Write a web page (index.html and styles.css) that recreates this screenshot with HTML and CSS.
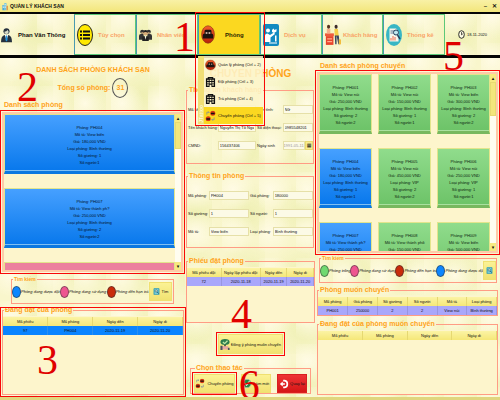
FILE: index.html
```html
<!DOCTYPE html>
<html lang="vi">
<head>
<meta charset="utf-8">
<title>QUẢN LÝ KHÁCH SẠN</title>
<link rel="stylesheet" href="styles.css">
</head>
<body>
<svg class="defs" aria-hidden="true">
  <defs>
    <linearGradient id="ball" x1="0" y1="0" x2="0" y2="1"><stop offset="0" stop-color="#f6602a"/><stop offset="1" stop-color="#b51f08"/></linearGradient>
    <symbol id="bed" viewBox="0 0 24 24" preserveAspectRatio="none"><circle cx="12" cy="12" r="11" fill="url(#ball)" stroke="#8c3a18"/><path d="M6 11V8q0-2 2-2h8q2 0 2 2v3zM3 17v-4q0-2 2-2h14q2 0 2 2v4z" fill="#1c1210"/><path d="M8 9h3v2H8zM13 9h3v2h-3z" fill="#f5d9c8"/></symbol>
    <symbol id="building" viewBox="0 0 24 24"><path d="M6 1h12v3h4v19H2V4h4z" fill="#111"/><path d="M5 7h3v3H5zM10 7h4v3h-4zM16 7h3v3h-3zM5 12h3v3H5zM10 12h4v3h-4zM16 12h3v3h-3zM5 17h3v3H5zM16 17h3v3h-3zM10 18h4v5h-4zM9 3h6v1H9z" fill="#fdf5cc"/></symbol>
    <symbol id="move" viewBox="0 0 24 24"><circle cx="17" cy="6" r="5.500" fill="#d83a14"/><path d="M13 5h8v3h-8z" fill="#111"/><circle cx="7" cy="18" r="5.500" fill="#d83a14"/><path d="M3 17h8v3H3z" fill="#111"/><path d="M4 9V4h5M7 2l2 2-2 2M20 15v5h-5M17 22l-2-2 2-2" fill="none" stroke="#7886a0" stroke-width="1.500"/></symbol>
    <symbol id="find" viewBox="0 0 24 24"><rect x="2" y="1" width="20" height="22" rx="2" fill="#2596b8"/><rect x="5" y="3" width="14" height="18" fill="#7ccbd4"/><circle cx="11" cy="10" r="4" fill="#e8f4d8" stroke="#145a78" stroke-width="2"/><path d="m14 13 5 6" stroke="#145a78" stroke-width="3"/></symbol>
  </defs>
</svg>

<header class="titlebar">
  <svg class="logo" viewBox="0 0 16 20"><path d="M1 6h6v14H1z" fill="#4aa9d8"/><path d="M6 1h6v19H6z" fill="#70c3df"/><path d="M12 8h4v12h-4z" fill="#e49a4b"/><path d="M2 8h3v2H2zM2 12h3v2H2zM7 4h3v2H7zM7 8h3v2H7zM7 12h3v2H7z" fill="#eefafa"/></svg>
  <h1>QUẢN LÝ KHÁCH SẠN</h1>
  <button class="win" aria-label="Thu nhỏ">–</button>
  <button class="win" aria-label="Đóng">✕</button>
</header>

<nav class="menubar">
  <div class="user">
    <svg class="person" viewBox="0 0 20 28"><circle cx="10" cy="7" r="5.500" fill="#26313f"/><path d="M0 27q0-12 7-13h6q7 1 7 13z" fill="#26313f"/><path d="m7 14 3 10 3-10z" fill="#fff"/><path d="m9 15h2l1 8-2 3-2-3z" fill="#2293dc"/><path d="M6 8q4 0 6-3l2 3q0 4-4 4T6 8" fill="#d9dcc8"/></svg>
    <span>Phan Văn Thông</span>
  </div>
  <a href="#options"><svg viewBox="0 0 32 44" preserveAspectRatio="none"><ellipse cx="16" cy="22" rx="15" ry="21" fill="#ffe900" stroke="#222" stroke-width="2"/><path d="M12 13h14v4H12zM12 20h14v4H12zM12 27h14v4H12zM6 13h4v4H6zM6 20h4v4H6zM6 27h4v4H6z" fill="#111"/></svg><span>Tùy chọn</span></a>
  <a href="#staff"><svg class="small" viewBox="0 0 28 28"><circle cx="7" cy="7" r="4.500" fill="#333"/><circle cx="21" cy="7" r="4.500" fill="#333"/><path d="M0 24V16q0-4 4-4h6v12zM18 12h6q4 0 4 4v8H18z" fill="#333"/><circle cx="14" cy="10" r="5" fill="#d8ad7b"/><path d="M9 9q0-6 5-6t5 6q-5-3-10 0zM7 27v-6q0-5 4-5h6q4 0 4 5v6z" fill="#222"/><path d="m12 16 2 8 2-8z" fill="#f4f4e0"/><path d="M5 8h4v3H5zM19 8h4v3h-4z" fill="#d8ad7b"/></svg><span>Nhân viên</span></a>
  <div class="open">
    <a class="active" href="#rooms"><svg viewBox="0 0 24 24" preserveAspectRatio="none"><use href="#bed"/></svg><span>Phòng</span></a>
    <div class="menu">
      <div class="strip"><span>JTattoo</span></div>
      <ul>
        <li><a href="#m2"><svg viewBox="0 0 24 24"><use href="#bed"/></svg>Quản lý phòng (Ctrl + 2)</a></li>
        <li><a href="#m3"><svg viewBox="0 0 24 24"><use href="#building"/></svg>Đặt phòng (Crtl + 3)</a></li>
        <li><a href="#m4"><svg viewBox="0 0 24 24"><use href="#building"/></svg>Trả phòng (Ctrl + 4)</a></li>
        <li class="chosen"><a href="#m5"><svg viewBox="0 0 24 24"><use href="#move"/></svg>Chuyển phòng (Ctrl + 5)</a></li>
      </ul>
    </div>
    <div class="mark mark-menu"></div>
    <b class="num num-1">1</b>
  </div>
  <a href="#services"><svg viewBox="0 0 32 44" preserveAspectRatio="none"><rect width="32" height="44" rx="4" fill="#128ac0"/><circle cx="10" cy="13" r="4" fill="#fff"/><path d="M4 36V24q0-5 5-5l5 3 8-5 2 3-9 7v9z" fill="#fff"/><path d="m18 12 3-3 2 3 4-2v5l-5 3-4-2zM12 37h16v2H12zM24 23h3v12h-3z" fill="#fff"/></svg><span>Dịch vụ</span></a>
  <a class="tight" href="#guests"><svg viewBox="0 0 36 40" preserveAspectRatio="none"><path d="M0 17h20v5H0z" fill="#f05a3c"/><path d="M2 22h17v16H2z" fill="#e8452c"/><path d="M5 26h11v2H5zM5 31h11v2H5z" fill="#ffad8c"/><circle cx="8" cy="5" r="3.500" fill="#58321f"/><path d="M4 9h8v8H4z" fill="#f5b08b"/><circle cx="25" cy="5" r="3.500" fill="#3d2c28"/><path d="M21 9h8l2 13h-9z" fill="#f6cf46"/><path d="M22 21h4v16h-3zM26 21h5l2 16h-3z" fill="#39465f"/><path d="M31 28h5v9h-5z" fill="#f3bd3e"/></svg><span>Khách hàng</span></a>
  <a href="#stats"><svg viewBox="0 0 32 44" preserveAspectRatio="none"><ellipse cx="16" cy="22" rx="16" ry="22" fill="#38b6c4"/><path d="M7 9h13l5 6v20H7z" fill="#f5f5ec"/><path d="M9 28h2v5H9zM13 24h2v9h-2zM17 26h2v7h-2z" fill="#ef6b4a"/><path d="M9 13h8v2H9zM9 17h6v2H9z" fill="#5a7b9c"/><circle cx="20" cy="17" r="5" fill="#bfe6ef" stroke="#26415e" stroke-width="2"/><path d="m23 22 5 8" stroke="#26415e" stroke-width="3"/></svg><span>Thống kê</span></a>
  <div class="date"><svg viewBox="0 0 20 26" preserveAspectRatio="none"><ellipse cx="10" cy="13" rx="8" ry="11" fill="#fffde6" stroke="#111" stroke-width="2.500"/><path d="M10 6v8l4-3" fill="none" stroke="#111" stroke-width="2"/></svg><time>18-11-2020</time></div>
</nav>

<main>
  <section class="col left">
    <h2>DANH SÁCH PHÒNG KHÁCH SẠN</h2>
    <p class="total">Tổng số phòng: <span>31</span></p>
    <b class="num num-2">2</b>
    <h3>Danh sách phòng</h3>
    <div class="frame">
      <div class="view rooms-wide">
        <article class="room blue"><span>Phòng: PH004</span><span>Mô tả: View biển</span><span>Giá: 180,000 VND</span><span>Loại phòng: Bình thường</span><span>Số giường: 1</span><span>Số người:1</span></article>
        <article class="room blue"><span>Phòng: PH007</span><span>Mô tả: View thành ph?</span><span>Giá: 250,000 VND</span><span>Loại phòng: Bình thường</span><span>Số giường: 2</span><span>Số người:2</span></article>
        <article class="room pink"></article>
      </div>
      <div class="scroll"><i>▴</i><div class="thumb"></div><i>▾</i></div>
      <div class="mark mark-fill"></div>
    </div>
    <fieldset class="search">
      <legend>Tìm kiếm</legend>
      <label class="key k-blue"><input type="radio" name="l">Phòng đang được đặt</label>
      <label class="key k-pink"><input type="radio" name="l">Phòng đang sử dụng</label>
      <label class="key k-red"><input type="radio" name="l">Phòng đến hạn trả</label>
      <button class="btn"><svg viewBox="0 0 24 24"><use href="#find"/></svg>Tìm</button>
    </fieldset>
    <fieldset class="panel grow">
      <legend>Đang đặt của phòng</legend>
      <table>
        <thead><tr><th>Mã phiếu</th><th>Mã phòng</th><th>Ngày đến</th><th>Ngày đi</th></tr></thead>
        <tbody><tr class="picked"><td>97</td><td>PH004</td><td>2020-11-19</td><td>2020-11-20</td></tr></tbody>
      </table>
      <div class="mark mark-book"></div>
      <b class="num num-3">3</b>
    </fieldset>
  </section>

  <section class="col middle">
    <h2 class="big">CHUYỂN PHÒNG</h2>
    <fieldset class="form guest">
      <legend>Thông tin khách hàng</legend>
      <label for="g1">Mã khách hàng:</label><input id="g1" value="KH004"><label for="g2">Giới tính:</label><input id="g2" value="Nữ">
      <label for="g3">Tên khách hàng:</label><input id="g3" value="Nguyễn Thị Tố Nga"><label for="g4">Số điện thoại:</label><input id="g4" value="0985548201">
      <label for="g5">CMND:</label><input id="g5" value="156437406"><label for="g6">Ngày sinh</label><div class="datebox"><input id="g6" value="1991-05-11" disabled><button aria-label="Chọn ngày">▦</button></div>
    </fieldset>
    <fieldset class="form roominfo">
      <legend>Thông tin phòng</legend>
      <label for="r1">Mã phòng:</label><input id="r1" value="PH004"><label for="r2">Giá phòng:</label><input id="r2" value="180000">
      <label for="r3">Số giường:</label><input id="r3" value="1"><label for="r4">Số người:</label><input id="r4" value="1">
      <label for="r5">Mô tả:</label><input id="r5" value="View biển"><label for="r6">Loại phòng:</label><input id="r6" value="Bình thường">
    </fieldset>
    <fieldset class="panel slip">
      <legend>Phiếu đặt phòng</legend>
      <table>
        <thead><tr><th>Mã phiếu đặt</th><th>Ngày lập phiếu đặt</th><th>Ngày đến</th><th>Ngày đi</th></tr></thead>
        <tbody><tr><td>72</td><td>2020-11-18</td><td>2020-11-19</td><td>2020-11-20</td></tr></tbody>
      </table>
    </fieldset>
    <div class="agree">
      <button class="btn"><svg class="tall" viewBox="0 0 24 28"><ellipse cx="12" cy="8" rx="11" ry="7" fill="#2c7d4d"/><path d="m7 8 4 4 7-7" fill="none" stroke="#bde8a4" stroke-width="3"/><path d="M10 14h4v6h-4z" fill="#31563f"/><path d="M4 18h16v8H4z" fill="#e7a7a0"/><path d="M1 17h5v10H1zM19 22h4v5h-4z" fill="#4d5360"/></svg>Đồng ý phòng muốn chuyển</button>
      <div class="mark mark-near"></div>
      <b class="num num-4">4</b>
    </div>
    <fieldset class="actions">
      <legend>Chọn thao tác</legend>
      <div class="slot"><button class="btn"><svg viewBox="0 0 24 24"><use href="#move"/></svg>Chuyển phòng</button><div class="mark mark-near"></div></div>
      <div class="slot"><button class="btn"><svg viewBox="0 0 24 24"><circle cx="12" cy="12" r="10" fill="#208645" stroke="#a9c5ad" stroke-width="2"/><path d="m7 12 4 4 7-9" fill="none" stroke="#fff" stroke-width="3"/></svg>Làm mới</button><b class="num num-6">6</b></div>
      <div class="slot"><button class="btn back"><svg viewBox="0 0 24 24"><path d="M10 2h4q8 1 8 10t-8 10h-4v-4h3q5 0 5-6t-5-6h-3z" fill="#fff"/><path d="M14 10v4H9v4l-7-6 7-6v4z" fill="#fff"/></svg>Quay lại</button></div>
    </fieldset>
  </section>

  <section class="col right">
    <h3>Danh sách phòng chuyển</h3>
    <b class="num num-5">5</b>
    <div class="frame">
      <div class="view rooms-grid">
        <article class="room green"><span>Phòng: PH001</span><span>Mô tả: View núi</span><span>Giá: 250,000 VND</span><span>Loại phòng: Bình thường</span><span>Số giường: 2</span><span>Số người:2</span></article>
        <article class="room green"><span>Phòng: PH002</span><span>Mô tả: View núi</span><span>Giá: 150,000 VND</span><span>Loại phòng: Bình thường</span><span>Số giường: 1</span><span>Số người:1</span></article>
        <article class="room green"><span>Phòng: PH003</span><span>Mô tả: View biển</span><span>Giá: 300,000 VND</span><span>Loại phòng: Bình thường</span><span>Số giường: 2</span><span>Số người:2</span></article>
        <article class="room blue"><span>Phòng: PH004</span><span>Mô tả: View biển</span><span>Giá: 180,000 VND</span><span>Loại phòng: Bình thường</span><span>Số giường: 1</span><span>Số người:1</span></article>
        <article class="room green"><span>Phòng: PH005</span><span>Mô tả: View núi</span><span>Giá: 450,000 VND</span><span>Loại phòng: VIP</span><span>Số giường: 2</span><span>Số người:2</span></article>
        <article class="room green"><span>Phòng: PH006</span><span>Mô tả: View núi</span><span>Giá: 250,000 VND</span><span>Loại phòng: VIP</span><span>Số giường: 1</span><span>Số người:1</span></article>
        <article class="room blue"><span>Phòng: PH007</span><span>Mô tả: View thành ph?</span><span>Giá: 250,000 VND</span></article>
        <article class="room green"><span>Phòng: PH008</span><span>Mô tả: View thành phố</span><span>Giá: 150,000 VND</span></article>
        <article class="room green"><span>Phòng: PH009</span><span>Mô tả: View biển</span><span>Giá: 500,000 VND</span></article>
      </div>
      <div class="scroll"><i>▴</i><div class="thumb"></div><i>▾</i></div>
      <div class="mark mark-fill"></div>
    </div>
    <fieldset class="search">
      <legend>Tìm kiếm</legend>
      <label class="key k-green"><input type="radio" name="r">Phòng trống</label>
      <label class="key k-pink"><input type="radio" name="r">Phòng đang sử dụng</label>
      <label class="key k-red"><input type="radio" name="r">Phòng đến hạn trả</label>
      <label class="key k-blue"><input type="radio" name="r">Phòng đang được đặt</label>
      <button class="btn" aria-label="Tìm"><svg viewBox="0 0 24 24"><use href="#find"/></svg></button>
    </fieldset>
    <fieldset class="panel target">
      <legend>Phòng muốn chuyển</legend>
      <table>
        <thead><tr><th>Mã phòng</th><th>Giá phòng</th><th>Số giường</th><th>Số người</th><th>Mô tả</th><th>Loại phòng</th></tr></thead>
        <tbody><tr><td>PH001</td><td>250000</td><td>2</td><td>2</td><td>View núi</td><td>Bình thường</td></tr></tbody>
      </table>
    </fieldset>
    <fieldset class="panel grow">
      <legend>Đang đặt của phòng muốn chuyển</legend>
      <table>
        <thead><tr><th>Mã phiếu</th><th>Mã phòng</th><th>Ngày đến</th><th>Ngày đi</th></tr></thead>
      </table>
    </fieldset>
  </section>
</main>
</body>
</html>
```

FILE: styles.css
```css
:root {
  --cream: #fdf5cc;
  --orange: #ffa31a;
  --salmon: #ff9c84;
  --mark: #f80808;
  --gold: linear-gradient(#fbf3a4, #f5e778);
}
* { box-sizing: border-box; }
body {
  margin: 0;
  min-height: 100vh;
  display: flex;
  flex-direction: column;
  font: 4px/7px "Liberation Sans", sans-serif;
  color: #111;
  border-bottom: 3px solid #e0d67e;
  background:
    radial-gradient(ellipse at 30% 40%, #fffbe4 0, transparent 60%) 0 0 / 37px 43px,
    radial-gradient(ellipse at 70% 60%, #eff0b4 0, transparent 60%) 0 0 / 53px 59px,
    #f9f6cc;
}
h1, h2, h3, p, ul { margin: 0; padding: 0; }
button, input { font: inherit; color: inherit; padding: 0; margin: 0; min-width: 0; border-radius: 0; }
a { color: inherit; text-decoration: none; }
.defs { position: absolute; width: 0; height: 0; }

.titlebar {
  display: flex;
  align-items: center;
  gap: 2px;
  height: 12px;
  padding: 0 2px;
  background: linear-gradient(#f9f1a6, #f3e67b);
}
.titlebar h1 { flex: 1; font-size: 5px; line-height: 8px; font-weight: bold; }
.logo { width: 6px; height: 9px; }
.win { width: 7px; border: 0; background: none; font-size: 6px; font-weight: bold; line-height: 8px; }

.menubar {
  display: grid;
  grid-template-columns: 74fr 62fr 62fr 62fr 62fr 61fr 62fr 55fr;
  height: 46px;
  border: solid #050505;
  border-width: 2px 0 3px;
  font-size: 6px;
  font-weight: bold;
  line-height: 10px;
}
.menubar > * { display: flex; align-items: center; min-width: 0; white-space: nowrap; }
.menubar > a, .active { gap: 5px; padding-left: 2px; border: 1px solid #5cc878; border-left-color: #4a9ab0; color: #f9a468; }
.menubar > .tight { gap: 2px; }
.menubar > a > svg, .active > svg { width: 16px; height: 22px; flex: none; }
.menubar > a > svg.small { width: 13px; height: 14px; }
.user { gap: 6px; padding-left: 1px; }
.person { width: 11px; height: 16px; flex: none; }
.open { position: relative; z-index: 5; }
.open > .active { flex: 1; display: flex; align-items: center; align-self: stretch; gap: 10px; background: #fbd820; color: #2c2600; }
.active > svg { width: 14px; height: 19px; }
.date { gap: 2px; justify-content: center; font-size: 4px; font-weight: normal; }
.date svg { width: 7px; height: 9px; }

.menu { position: absolute; top: 42px; left: 0; width: 65px; display: flex; background: #fdf5cce0; }
.strip { width: 6px; background: #f1df76; display: flex; align-items: end; }
.strip span { writing-mode: vertical-rl; rotate: 180deg; font-size: 5px; line-height: 6px; color: #fffbd8; padding-top: 1px; }
.menu ul { flex: 1; list-style: none; font-size: 4px; font-weight: normal; }
.menu li a { display: flex; align-items: center; gap: 2px; height: 17px; padding-left: 1px; white-space: nowrap; }
.menu svg { width: 11px; height: 12px; flex: none; }
.chosen { background: #fbd820; }

.mark { position: absolute; border: 1px solid var(--mark); pointer-events: none; z-index: 6; }
.mark-menu { left: -3px; width: 70px; top: -2px; height: 114px; }
.mark-fill { inset: -4px; }
.mark-book { inset: -8px -3px -3px; }
.mark-near { inset: -2px; }
.num { position: absolute; z-index: 7; font: 42px/42px "Liberation Serif", serif; color: #e00000; pointer-events: none; }
.num-1 { left: -24px; top: 2px; }
.num-2 { left: 17px; top: 8px; }
.num-3 { left: 34px; top: 24px; }
.num-4 { left: 13px; top: -41px; }
.num-5 { right: 36px; top: -23px; }
.num-6 { left: -2px; top: -10px; }

main { flex: 1; display: grid; grid-template-columns: 186fr 129fr 185fr; }
.col { position: relative; display: flex; flex-direction: column; min-width: 0; }
.left { padding: 7px 2px 2px; }
.middle { padding: 9px 0 2px; }
.right { padding: 3px 2px 2px; }
h2 { text-align: center; font-size: 7px; line-height: 10px; color: var(--orange); }
.big { font-size: 10px; line-height: 14px; }
h3 { padding-left: 2px; font-size: 7px; line-height: 10px; color: var(--orange); }
.right h3 { padding-left: 3px; }
.total { display: flex; justify-content: center; align-items: center; gap: 2px; margin: 3px 0 2px; font-size: 7px; font-weight: bold; line-height: 10px; color: var(--orange); }
.total span { width: 16px; height: 20px; line-height: 18px; border: 1px solid #555; border-radius: 50%; text-align: center; }

.frame { position: relative; display: flex; border: 2px solid #ffcaa8; background: var(--cream); margin: 2px 1px 3px 0; }
.right .frame { margin: 1px 0 2px; }
.view { flex: 1; min-width: 0; overflow: hidden; }
.rooms-wide { display: grid; gap: 14px; grid-auto-rows: 60px; height: 156px; }
.rooms-grid { display: grid; gap: 14px 6px; grid-template-columns: repeat(3, minmax(0, 1fr)); grid-auto-rows: 60px; height: 177px; }
.room { display: grid; grid-auto-rows: 7px; padding: 9px 0; text-align: center; white-space: nowrap; color: #041226; border: 1px solid #e2e58c; border-bottom: 3px solid; }
.blue { background: linear-gradient(#46a0ff, #0878ec); border-bottom-color: #0c78e0; box-shadow: inset 0 -1px #7fc0f5; }
.green { background: linear-gradient(#90dc8c, #6dc368); border-bottom-color: #78b85f; box-shadow: inset 0 -1px #a9e0a0; color: #0c240e; }
.pink { background: #ec809e; }
.scroll { width: 6px; flex: none; display: flex; flex-direction: column; background: #fffdf0; }
.scroll i { height: 8px; font: 5px/8px "DejaVu Sans", sans-serif; text-align: center; background: #f7ea80; margin-top: auto; }
.scroll i:first-child { margin: 0; }
.thumb { height: 27px; background: #f3e67b; border: 1px solid #e8da70; }
.right .thumb { height: 34px; }

fieldset { position: relative; min-width: 0; margin: 0; padding: 0; border: 1px solid var(--salmon); }
legend { padding: 0 1px; margin-left: 1px; font-size: 7px; font-weight: bold; line-height: 10px; color: var(--orange); }
.panel { background: linear-gradient(transparent 0 5px, var(--cream) 5px); }
.grow { flex: 1; }
.target { margin-bottom: 3px; }
table { width: 100%; border-collapse: collapse; table-layout: fixed; margin-top: 2px; text-align: center; }
th, td { height: 9px; padding: 0; line-height: 7px; font-weight: normal; border-right: 1px solid #e6d871; white-space: nowrap; }
th { background: var(--gold); }
td { background: #a9a7fb; border-color: #9896e0; }
.picked td { background: #0a84ff; border-color: #2a90ef; }

.search { display: flex; align-items: center; height: 28px; padding-right: 1px; }
.search legend { font-size: 5px; line-height: 6px; }
.left .search { margin: 1px 10px 1px 9px; }
.key { display: flex; align-items: center; flex: 1 1 auto; min-width: 0; font-style: italic; white-space: nowrap; }
.key input { appearance: none; flex: none; width: 9px; height: 12px; border: 1px solid #3338; border-radius: 50%; background: var(--dot); }
.k-blue { --dot: #0c86ff; }
.k-pink { --dot: #ee5590; }
.k-red { --dot: #c92b0b; }
.k-green { --dot: #70d970; }
.btn { display: flex; align-items: center; justify-content: center; gap: 2px; height: 19px; border: 1px solid #f0e070; background: linear-gradient(#fbf294, #f1e272); white-space: nowrap; }
.btn svg { width: 10px; height: 13px; flex: none; }
.search .btn { flex: none; width: 23px; }
.search .btn svg { width: 7px; height: 9px; }
.right .search { margin: 0 1px 2px 2px; padding-right: 0; }
.right .search .btn { width: 13px; }

.form { display: grid; align-items: center; align-content: start; grid-auto-rows: 9px; gap: 9px 0; padding-top: 10px; margin-right: 1px; white-space: nowrap; }
.form label { padding-left: 1px; }
.form input { width: 100%; height: 9px; padding: 0 1px; border: 1px solid #e6e0a8; background: #fcfae6; }
.form .datebox input { flex: 1; color: #999; padding: 0; }
.guest { grid-template-columns: 31fr 39fr 27fr 31fr; height: 79px; margin-top: 4px; }
.roominfo { grid-template-columns: 22fr 41fr 24fr 41fr; height: 77px; margin-top: 7px; }
.datebox { display: flex; }
.datebox button { width: 8px; border: 1px solid #eadb70; background: #f7eb90; font: 5px/7px "DejaVu Sans", sans-serif; }
.slip { height: 67px; margin: 8px 0 0; }
.slip th:nth-child(1) { width: 27%; }
.slip th:nth-child(2) { width: 31%; }
.agree { position: relative; align-self: center; margin-top: 11px; }
.agree .btn { width: 65px; height: 20px; gap: 1px; }
.agree .btn svg { height: 15px; }
.actions { display: grid; grid-template-columns: 42fr 31fr 31fr; gap: 6px; padding: 1px 3px 0; margin: auto 4px 1px; }
.slot { position: relative; }
.slot .btn { width: 100%; }
.actions .slot + .slot .btn { gap: 1px; }
.slot .back { background: linear-gradient(#ee3434, #d51616); border-color: #d82020; }
.slot .back svg { width: 10px; height: 10px; }
```
